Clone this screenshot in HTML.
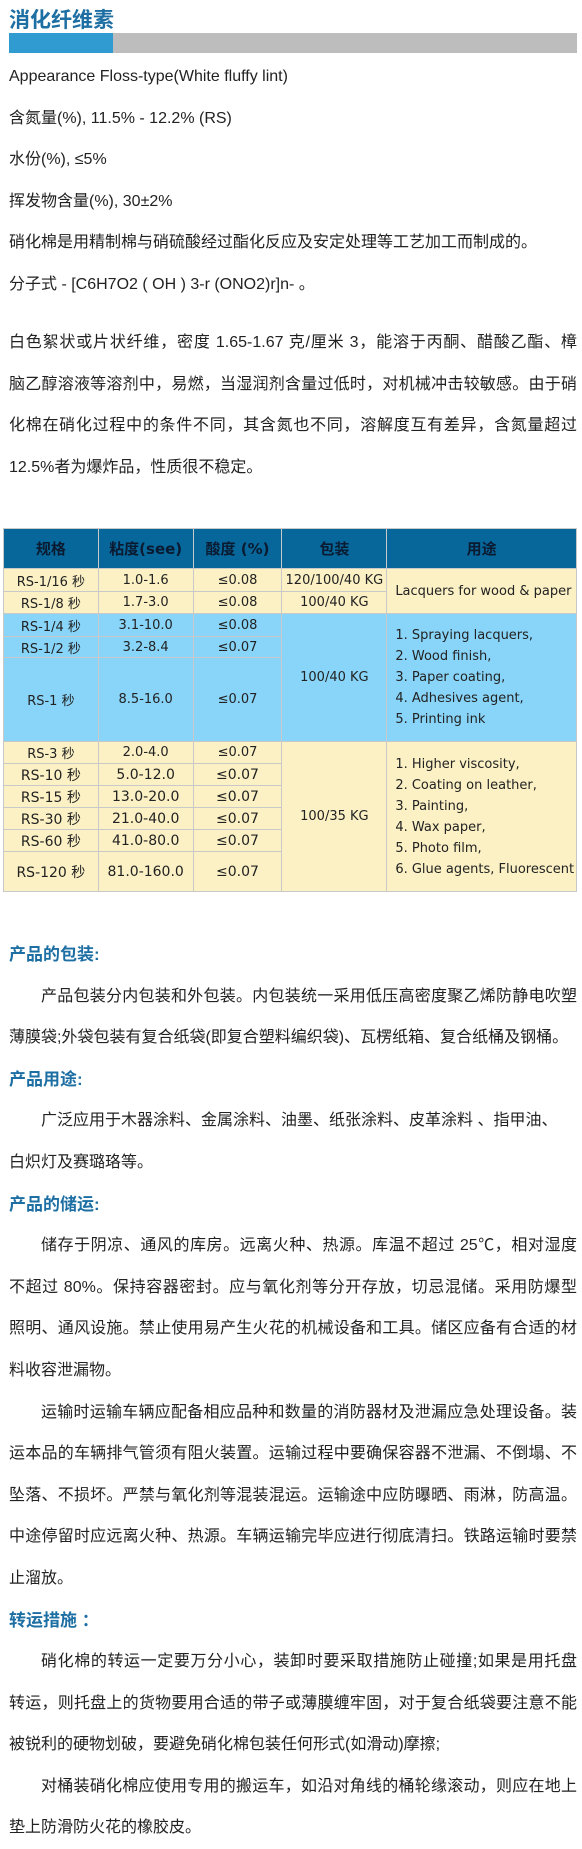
<!DOCTYPE html>
<html><head><meta charset="utf-8"><style>
*{margin:0;padding:0;box-sizing:border-box}
body{width:582px;height:1848px;background:#fff;position:relative;font-family:"Liberation Sans","Noto Sans CJK SC",sans-serif;color:#222;overflow:hidden}
.t{position:absolute;left:9px;top:4px;font-size:21px;font-weight:bold;color:#1d6fa3}
.bar{position:absolute;left:9px;top:33px;width:568px;height:20px;background:#bdbdbd}
.bar i{position:absolute;left:0;top:0;width:104px;height:20px;background:#2f9bd0}
.blk{position:absolute;left:9px;width:568px;font-size:16px;line-height:41.6px}
.blk div{white-space:nowrap}
.j{text-align:justify;text-align-last:justify;white-space:normal!important}
.ind{padding-left:32px}
.h{color:#1d6fa3;font-weight:bold;font-size:17px}
table{position:absolute;left:3px;top:528px;width:574px;border-collapse:collapse;font-family:"DejaVu Sans","Noto Sans CJK SC",sans-serif;font-size:13px;text-align:center;color:#222}
td,th{border:1px solid #c9c9c9;padding:0}
th{background:#07679a;color:#0a1a30;font-size:15px;font-weight:bold;height:40px}
.c{background:#fbf1c5}.b{background:#89d5f9}
.big td{font-size:14px}
.l{text-align:left;padding-left:8px;line-height:21px}
</style></head><body>
<div class="t">消化纤维素</div>
<div class="bar"><i></i></div>
<div class="blk" style="top:56px">
<div>Appearance Floss-type(White fluffy lint)</div>
<div>含氮量(%), 11.5% - 12.2% (RS)</div>
<div>水份(%), ≤5%</div>
<div>挥发物含量(%), 30±2%</div>
<div>硝化棉是用精制棉与硝硫酸经过酯化反应及安定处理等工艺加工而制成的。</div>
<div>分子式 - [C6H7O2 ( OH ) 3-r (ONO2)r]n- 。</div>
</div>
<div class="blk" style="top:322px">
<div class="j">白色絮状或片状纤维，密度 1.65-1.67 克/厘米 3，能溶于丙酮、醋酸乙酯、樟</div>
<div class="j">脑乙醇溶液等溶剂中，易燃，当湿润剂含量过低时，对机械冲击较敏感。由于硝</div>
<div class="j">化棉在硝化过程中的条件不同，其含氮也不同，溶解度互有差异，含氮量超过</div>
<div>12.5%者为爆炸品，性质很不稳定。</div>
</div>
<table>
<colgroup><col style="width:95px"><col style="width:95px"><col style="width:89px"><col style="width:105px"><col style="width:190px"></colgroup>
<tr><th>规格</th><th>粘度(see)</th><th>酸度 (%)</th><th>包装</th><th>用途</th></tr>
<tr class="c" style="height:23px"><td>RS-1/16 秒</td><td>1.0-1.6</td><td>≤0.08</td><td>120/100/40 KG</td><td rowspan="2" class="l">Lacquers for wood &amp; paper</td></tr>
<tr class="c" style="height:22px"><td>RS-1/8 秒</td><td>1.7-3.0</td><td>≤0.08</td><td>100/40 KG</td></tr>
<tr class="b" style="height:23px"><td>RS-1/4 秒</td><td>3.1-10.0</td><td>≤0.08</td><td rowspan="3">100/40 KG</td><td rowspan="3" class="l">1. Spraying lacquers,<br>2. Wood finish,<br>3. Paper coating,<br>4. Adhesives agent,<br>5. Printing ink</td></tr>
<tr class="b" style="height:21px"><td>RS-1/2 秒</td><td>3.2-8.4</td><td>≤0.07</td></tr>
<tr class="b" style="height:84px"><td>RS-1 秒</td><td>8.5-16.0</td><td>≤0.07</td></tr>
<tr class="c" style="height:22px"><td>RS-3 秒</td><td>2.0-4.0</td><td>≤0.07</td><td rowspan="6">100/35 KG</td><td rowspan="6" class="l">1. Higher viscosity,<br>2. Coating on leather,<br>3. Painting,<br>4. Wax paper,<br>5. Photo film,<br>6. Glue agents, Fluorescent</td></tr>
<tr class="c big" style="height:22px"><td>RS-10 秒</td><td>5.0-12.0</td><td>≤0.07</td></tr>
<tr class="c big" style="height:22px"><td>RS-15 秒</td><td>13.0-20.0</td><td>≤0.07</td></tr>
<tr class="c big" style="height:22px"><td>RS-30 秒</td><td>21.0-40.0</td><td>≤0.07</td></tr>
<tr class="c big" style="height:22px"><td>RS-60 秒</td><td>41.0-80.0</td><td>≤0.07</td></tr>
<tr class="c big" style="height:40px"><td>RS-120 秒</td><td>81.0-160.0</td><td>≤0.07</td></tr>
</table>
<div class="blk" style="top:934px">
<div class="h">产品的包装:</div>
<div class="j ind">产品包装分内包装和外包装。内包装统一采用低压高密度聚乙烯防静电吹塑</div>
<div>薄膜袋;外袋包装有复合纸袋(即复合塑料编织袋)、瓦楞纸箱、复合纸桶及钢桶。</div>
<div class="h">产品用途:</div>
<div class="ind">广泛应用于木器涂料、金属涂料、油墨、纸张涂料、皮革涂料 、指甲油、</div>
<div>白炽灯及赛璐珞等。</div>
<div class="h">产品的储运:</div>
<div class="j ind">储存于阴凉、通风的库房。远离火种、热源。库温不超过 25℃，相对湿度</div>
<div class="j">不超过 80%。保持容器密封。应与氧化剂等分开存放，切忌混储。采用防爆型</div>
<div class="j">照明、通风设施。禁止使用易产生火花的机械设备和工具。储区应备有合适的材</div>
<div>料收容泄漏物。</div>
<div class="j ind">运输时运输车辆应配备相应品种和数量的消防器材及泄漏应急处理设备。装</div>
<div class="j">运本品的车辆排气管须有阻火装置。运输过程中要确保容器不泄漏、不倒塌、不</div>
<div class="j">坠落、不损坏。严禁与氧化剂等混装混运。运输途中应防曝晒、雨淋，防高温。</div>
<div class="j">中途停留时应远离火种、热源。车辆运输完毕应进行彻底清扫。铁路运输时要禁</div>
<div>止溜放。</div>
<div class="h">转运措施 ：</div>
<div class="j ind">硝化棉的转运一定要万分小心，装卸时要采取措施防止碰撞;如果是用托盘</div>
<div class="j">转运，则托盘上的货物要用合适的带子或薄膜缠牢固，对于复合纸袋要注意不能</div>
<div>被锐利的硬物划破，要避免硝化棉包装任何形式(如滑动)摩擦;</div>
<div class="j ind">对桶装硝化棉应使用专用的搬运车，如沿对角线的桶轮缘滚动，则应在地上</div>
<div>垫上防滑防火花的橡胶皮。</div>
</div>
</body></html>
